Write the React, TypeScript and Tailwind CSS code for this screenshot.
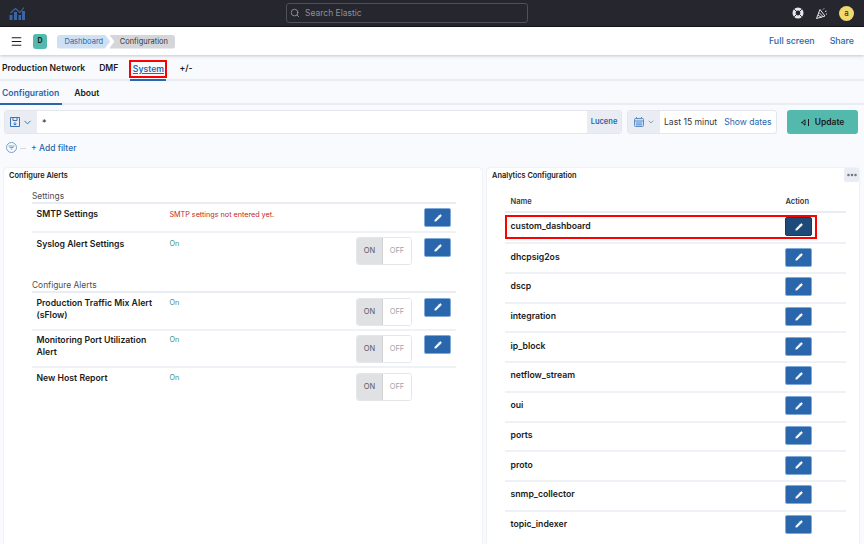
import { ChevronDown, Menu, Pencil, Search, MoreHorizontal } from "lucide-react";

const alertRows = [
  { name: "Production Traffic Mix Alert (sFlow)", edit: true },
  { name: "Monitoring Port Utilization Alert", edit: true },
  { name: "New Host Report", edit: false },
];

const tableRows = [
  "dhcpsig2os",
  "dscp",
  "integration",
  "ip_block",
  "netflow_stream",
  "oui",
  "ports",
  "proto",
  "snmp_collector",
  "topic_indexer",
];

function EditButton({ dark }: { dark?: boolean }) {
  return (
    <button
      className={`flex h-[19px] w-[27px] items-center justify-center rounded-[2px] border ${
        dark ? "border-[#16395f] bg-[#1d4a78]" : "border-[#7fa9d6] bg-[#2a66ab]"
      }`}
    >
      <Pencil size={8} className="fill-white text-white" strokeWidth={1.5} />
    </button>
  );
}

function OnOff() {
  return (
    <div className="flex h-[28px] w-[56px] overflow-hidden rounded-[3px] border border-[#e4e6ea] text-[7.5px]">
      <div className="flex w-[26px] items-center justify-center border-r border-[#cfd1d5] bg-[#e0e1e3] text-[#55585f]">
        ON
      </div>
      <div className="flex flex-1 items-center justify-center bg-white text-[#a2a5aa]">OFF</div>
    </div>
  );
}

function Logo() {
  return (
    <svg width="16" height="13" viewBox="0 0 16 13" className="text-[#3a66a6]">
      <path d="M0.5 13V8h3v5zM5 13V5h3v8zM9.5 13V8h2.5v5zM13 13V4h3v9z" fill="currentColor" />
      <path d="M1.5 6l5-4.5 4.5 4 4-5" fill="none" stroke="currentColor" strokeWidth="1.2" />
    </svg>
  );
}

function HelpIcon() {
  return (
    <svg width="12" height="12" viewBox="0 0 12 12" fill="none">
      <circle cx="6" cy="6" r="5.5" fill="#e6e7ea" />
      <circle cx="6" cy="6" r="2.4" fill="#25262e" />
      <path d="M2.2 2.2l2 2M9.8 2.2l-2 2M2.2 9.8l2-2M9.8 9.8l-2-2" stroke="#25262e" strokeWidth="1" />
    </svg>
  );
}

function NewsIcon() {
  return (
    <svg width="13" height="13" viewBox="0 0 13 13" fill="none" stroke="#e6e7ea" strokeWidth="1">
      <path d="M1.5 11.5L5 2.5l5 6.5z" />
      <path d="M3 8l3.5 2.5M4 5.5l4 4" />
      <path d="M8 2.5l1-1M10 4.5l1.5-.5M11 7h1" />
    </svg>
  );
}

export default function App() {
  return (
    <div className="flex h-[544px] w-[864px] flex-col overflow-hidden bg-[#f9fafd] font-['Inter',sans-serif] text-[#1a1c21]">
      {/* top bar */}
      <header className="flex h-[27px] shrink-0 items-center border-b border-[#111] bg-[#25262e]">
        <div className="ml-[9px]">
          <Logo />
        </div>
        <div className="ml-[261px] flex h-[20px] w-[242px] items-center rounded-[3px] border border-[#4f5159] bg-[#25262e] pl-[3px]">
          <Search size={10} className="text-[#9a9ca3]" />
          <span className="ml-[5px] text-[8.5px] text-[#8f9198]">Search Elastic</span>
        </div>
        <div className="ml-auto flex items-center">
          <HelpIcon />
          <div className="ml-[11px]">
            <NewsIcon />
          </div>
          <div className="ml-[11px] mr-[10px] flex h-[15px] w-[15px] items-center justify-center rounded-full bg-[#f1d86f] text-[8px] text-[#1a1c21]">
            a
          </div>
        </div>
      </header>

      {/* breadcrumb bar */}
      <div className="z-10 flex h-[28px] shrink-0 items-center bg-white pr-[6px] shadow-[0_1px_3px_rgba(90,100,130,0.35)]">
        <Menu size={13} className="ml-[10px] text-[#1a1c21]" />
        <div className="ml-[10px] flex h-[15px] w-[14px] items-center justify-center rounded-[3px] bg-[#54b9ad] text-[7px] font-bold">
          D
        </div>
        <div className="ml-[10px] mt-[1px] flex h-[14px] text-[7.5px]">
          <div className="flex items-center rounded-l-[3px] bg-[#cfe0f3] pl-[7.5px] pr-[7px] text-[#2a66ab] [clip-path:polygon(0_0,90%_0,100%_50%,90%_100%,0_100%)]">
            Dashboard
          </div>
          <div className="-ml-[1px] flex items-center rounded-r-[3px] bg-[#d4d6da] pl-[10.5px] pr-[7px] text-[#343741] [clip-path:polygon(0_0,100%_0,100%_100%,0_100%,8%_50%)]">
            Configuration
          </div>
        </div>
        <span className="ml-auto text-[8.8px] font-medium text-[#2a66ab]">Full screen</span>
        <span className="ml-[15px] mr-[4px] text-[8.8px] font-medium text-[#2a66ab]">Share</span>
      </div>

      {/* main tabs */}
      <nav className="flex h-[26px] shrink-0 items-center border-b-2 border-[#e9edf3] pl-[2px] pt-[3px] text-[8.6px] font-semibold">
        <span>Production Network</span>
        <span className="ml-[14px]">DMF</span>
        <div className="relative ml-[11px] flex h-full items-center">
          <span className="border-2 border-[#f00] px-[1.5px] py-px leading-[12px] text-[#2a66ab] underline">System</span>
          <div className="absolute -bottom-[2px] left-[1px] h-[2px] w-[36px] bg-[#2a66ab]" />
        </div>
        <span className="ml-[12px]">+/-</span>
      </nav>

      {/* sub tabs */}
      <nav className="flex h-[24px] shrink-0 items-center border-b-2 border-[#e9edf3] text-[8.6px] font-semibold">
        <div className="relative flex h-full items-center pl-[2px] pr-[3px] pt-[2px] text-[#2a66ab]">
          Configuration
          <div className="absolute -bottom-[2px] left-0 h-[2px] w-full bg-[#2a66ab]" />
        </div>
        <span className="ml-[12px] pt-[2px]">About</span>
      </nav>

      {/* query bar */}
      <div className="mt-[5px] flex shrink-0 items-start pl-[4px]">
        <div className="flex h-[24px] w-[618px] overflow-hidden rounded-[3px] border border-[#e3e6ee] bg-white">
          <div className="flex w-[32px] items-center justify-center gap-[2px] bg-[#e9edf3] text-[#2a66ab]">
            <svg width="10" height="10" viewBox="0 0 10 10" fill="none" stroke="currentColor" strokeWidth="0.9">
              <path d="M.5.5h9v9h-9zM3 .5v3h4v-3M5 5v3M3.5 6.8L5 8l1.5-1.2" />
            </svg>
            <ChevronDown size={11} />
          </div>
          <span className="ml-[5px] mt-[5px] text-[9px]">*</span>
          <div className="ml-auto flex w-[34px] items-center justify-center bg-[#e9edf3] text-[7.5px] font-semibold text-[#2a66ab]">
            Lucene
          </div>
        </div>
        <div className="ml-[5px] flex h-[24px] w-[150px] overflow-hidden rounded-[3px] border border-[#e3e6ee] bg-white">
          <div className="flex w-[32px] shrink-0 items-center justify-center gap-[3px] bg-[#e9edf3] text-[#5b8cc7]">
            <svg width="10" height="10" viewBox="0 0 10 10" fill="#cfe0f3" stroke="currentColor" strokeWidth="1">
              <rect x=".5" y="1.5" width="9" height="8" rx="1" />
              <path d="M.5 4h9M2.5 0v2M7.5 0v2M2 6h6M2 7.8h6" />
            </svg>
            <ChevronDown size={8} className="text-[#69707d]" />
          </div>
          <span className="ml-[4px] self-center whitespace-nowrap text-[8.6px] text-[#343741]">Last 15 minut</span>
          <span className="ml-[7px] self-center whitespace-nowrap text-[8.6px] text-[#2a66ab]">Show dates</span>
        </div>
        <button className="ml-[10px] flex h-[24px] w-[71px] items-center justify-center rounded-[3px] bg-[#54b9ad] text-[8.5px] font-semibold">
          <svg width="9" height="7" viewBox="0 0 9 7" className="mr-[5px]" fill="none" stroke="#1a1c21" strokeWidth="1">
            <path d="M4 .8L1 3.5 4 6.2zM0 3.5h1M7.5 0v7" />
          </svg>
          Update
        </button>
      </div>

      {/* filter bar */}
      <div className="mt-[7px] flex h-[14px] shrink-0 items-center pl-[6px]">
        <svg width="11" height="11" viewBox="0 0 11 11" fill="none" stroke="#5b8cc7" strokeWidth="0.8" className="-mt-[2px]">
          <circle cx="5.5" cy="5.5" r="5" />
          <path d="M2.5 4h6M3.5 5.5h4M4.7 7h1.6" />
        </svg>
        <div className="ml-[3px] h-px w-[6px] bg-[#d3dae6]" />
        <span className="ml-[5px] text-[8.5px] font-medium text-[#2a66ab]">+ Add filter</span>
      </div>

      {/* panels */}
      <div className="mt-[13px] flex min-h-0 flex-1 gap-[5px] pl-[4px]">
        <section className="w-[478px] rounded-t-[4px] bg-white pl-[5px] shadow-[0_0_2px_rgba(90,100,130,0.2)]">
          <h2 className="pt-[3px] text-[7.4px] font-semibold leading-[10px]">Configure Alerts</h2>

          <div className="ml-[23px] mr-[26px] mt-[10px]">
            <h3 className="border-b-2 border-[#e9edf3] text-[8.4px] leading-[11px] text-[#4c4f57]">Settings</h3>
            <div className="flex h-[29px] border-b-2 border-[#eef1f6] pl-[4.5px]">
              <div className="w-[133px] pt-[4px] text-[8.7px] font-semibold leading-[12px]">SMTP Settings</div>
              <div className="pt-[5.5px] text-[7.2px] leading-[10px] text-[#bd271e]">SMTP settings not entered yet.</div>
              <div className="ml-auto mr-[5px] pt-[4px]">
                <EditButton />
              </div>
            </div>
            <div className="flex h-[47px] pl-[4.5px]">
              <div className="w-[133px] pt-[5px] text-[8.7px] font-semibold leading-[12px]">Syslog Alert Settings</div>
              <div className="pt-[6px] text-[7.2px] leading-[10px] text-[#3f8f80]">On</div>
              <div className="ml-auto pt-[4px]">
                <OnOff />
              </div>
              <div className="ml-[12px] mr-[5px] pt-[5px]">
                <EditButton />
              </div>
            </div>

            <h3 className="border-b-2 border-[#e9edf3] text-[8.4px] leading-[11px] text-[#4c4f57]">
              Configure Alerts
            </h3>
            {alertRows.map((row, i) => (
              <div
                key={row.name}
                className={`flex h-[37.5px] pl-[4.5px] ${i < alertRows.length - 1 ? "border-b-2 border-[#eef1f6]" : ""}`}
              >
                <div className="w-[133px] pt-[3.5px] pr-[2px] text-[8.7px] font-semibold leading-[12px]">{row.name}</div>
                <div className="pt-[4.5px] text-[7.2px] leading-[10px] text-[#3f8f80]">On</div>
                <div className="ml-auto pt-[4.5px]">
                  <OnOff />
                </div>
                <div className="ml-[12px] mr-[5px] w-[27px] pt-[4.5px]">{row.edit && <EditButton />}</div>
              </div>
            ))}
          </div>
        </section>

        <section className="relative w-[372px] rounded-t-[4px] bg-white pl-[5px] shadow-[0_0_2px_rgba(90,100,130,0.2)]">
          <h2 className="pt-[3px] text-[7.4px] font-semibold leading-[10px]">Analytics Configuration</h2>
          <div className="absolute right-0 top-0 flex h-[14px] w-[15px] items-center justify-center rounded-[2px] bg-[#e9edf3] text-[#69707d]">
            <MoreHorizontal size={12} strokeWidth={3} />
          </div>

          <div className="ml-[13px] mr-[13px] mt-[12px]">
            <div className="flex h-[20px] items-start border-b-2 border-[#e9edf3] pl-[5.5px] pt-[4px] text-[7.5px] font-semibold leading-[10px] text-[#343741]">
              <span className="w-[275px]">Name</span>
              <span>Action</span>
            </div>
            <div className="flex h-[27.4px] items-center">
              <div className="ml-[2px] flex h-[20px] w-[308px] items-center pl-[3.5px] text-[8.7px] font-semibold outline-2 outline-[#f00]">
                <span className="w-[274.5px]">custom_dashboard</span>
                <EditButton dark />
              </div>
            </div>
            {tableRows.map((name) => (
              <div key={name} className="mt-[2px] flex h-[27.7px] items-center border-t-2 border-[#eef1f6] pl-[5.5px] text-[8.7px] font-semibold">
                <span className="w-[274.5px]">{name}</span>
                <EditButton />
              </div>
            ))}
          </div>
        </section>
      </div>
    </div>
  );
}
